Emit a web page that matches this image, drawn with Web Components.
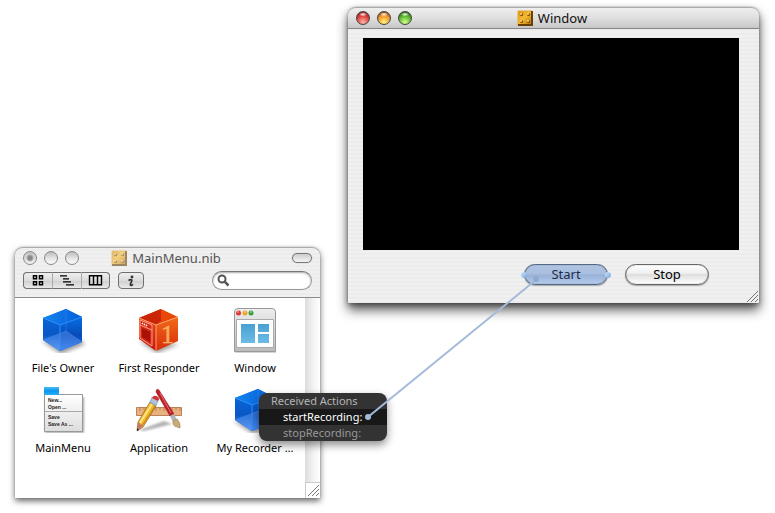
<!DOCTYPE html>
<html lang="en">
<head>
<meta charset="utf-8">
<title>Interface Builder</title>
<style>
html, body { margin: 0; min-height: 100%; background: #fff; }
body { font: 11px/16px "Noto Sans", "Open Sans", sans-serif; color: #000; }
</style>
</head>
<body>
<ib-desktop>
  <ib-window class="nib" heading="MainMenu.nib" inactive>
    <ib-toolbar slot="tools"></ib-toolbar>
    <ib-browser>
      <ib-item kind="cube" label="File's Owner"></ib-item>
      <ib-item kind="responder" label="First Responder"></ib-item>
      <ib-item kind="window" label="Window"></ib-item>
      <ib-item kind="menu" label="MainMenu"></ib-item>
      <ib-item kind="app" label="Application"></ib-item>
      <ib-item kind="cube" label="My Recorder …"></ib-item>
    </ib-browser>
  </ib-window>
  <ib-window class="preview" heading="Window">
    <ib-recorder></ib-recorder>
  </ib-window>
  <ib-actions class="popup"></ib-actions>
  <ib-connection class="wire"></ib-connection>
</ib-desktop>

<script>
const define = (name, html) => customElements.define(name, class extends HTMLElement {
  constructor() {
    super();
    this.attachShadow({ mode: "open" });
  }
  connectedCallback() {
    if (this.shadowRoot.childNodes.length) return;
    const t = document.createElement("template");
    t.innerHTML = typeof html === "function" ? html(this) : html;
    this.shadowRoot.append(t.content.cloneNode(true));
  }
});

define("ib-desktop", `
<style>
:host { display: block; position: relative; min-height: 100vh; overflow: hidden; }
::slotted(.nib) { position: absolute; left: 15px; top: 247px; width: 305px; }
::slotted(.preview) { position: absolute; left: 348px; top: 7px; width: 411px; }
::slotted(.popup) { position: absolute; left: 259px; top: 393px; width: 128px; }
::slotted(.wire) { position: absolute; inset: 0; pointer-events: none; }
</style><slot></slot>`);

define("ib-window", el => {
  const off = el.hasAttribute("inactive");
  return `
<style>
:host { display: block; border-radius: 8px 8px 0 0;
  background: repeating-linear-gradient(#f0f0f0 0 2px, #ececec 2px 4px);
  box-shadow: 0 0 1px #555, 0 7px 12px rgba(0,0,0,.65), 0 2px 5px rgba(0,0,0,.35); }
:host([inactive]) { box-shadow: 0 0 1px #666, 0 3px 6px rgba(0,0,0,.6); }
header { box-sizing: border-box; display: grid; grid-template-columns: 1fr auto 1fr; align-items: center; height: 22px; padding: 0 8px; border-radius: 8px 8px 0 0;
  border-top: 1px solid #aaa; border-bottom: 1px solid #858585; background: linear-gradient(#eee, #e1e1e1 45%, #c7c7c7); }
:host([inactive]) header { border-bottom-color: transparent; background: none; }
.lights { display: flex; gap: 7px; }
.lights button { box-sizing: border-box; width: 14px; height: 14px; padding: 0; border-radius: 50%; border: 1px solid #444; }
.on .r { background: radial-gradient(ellipse 4px 2px at 50% 20%, #fff, transparent), radial-gradient(circle at 50% 85%, #ffb6a8, #dc3f3d 55%, #6c1414); }
.on .y { background: radial-gradient(ellipse 4px 2px at 50% 20%, #fff, transparent), radial-gradient(circle at 50% 85%, #fff67c, #ee952a 55%, #713005); }
.on .g { background: radial-gradient(ellipse 4px 2px at 50% 20%, #fff, transparent), radial-gradient(circle at 50% 85%, #d8ff91, #55b42a 55%, #124a09); }
.off button { border: 1px solid #888; background: linear-gradient(#bcbcbc, #e6e6e6 55%, #fafafa); }
.off .r { background: radial-gradient(circle, #888 0 2px, transparent 4px), linear-gradient(#c2c2c2, #f2f2f2); }
h1 { display: flex; align-items: center; gap: 5px; margin: 0; font-size: 13px; font-weight: 400; line-height: 20px; color: #111; }
:host([inactive]) h1 { color: #555; padding-right: 3px; }
:host(:not([inactive])) h1 { padding-right: 3px; }
:host([inactive]) h1 svg { opacity: .6; }
.pill { justify-self: end; width: 20px; height: 10px; padding: 0; border: 1px solid #777; border-radius: 5px; background: linear-gradient(#ccc, #f5f5f5); box-shadow: 0 0 1px #888; }
</style>
<header>
  <div class="lights ${off ? "off" : "on"}"><button class="r" aria-label="Close"></button><button class="y" aria-label="Minimize"></button><button class="g" aria-label="Zoom"></button></div>
  <h1><svg width="16" height="16" viewBox="0 0 16 16"><defs><linearGradient id="g" x2="1" y2="1"><stop stop-color="#d88d08"/><stop offset=".45" stop-color="#f4bd31"/><stop offset="1" stop-color="#b66e05"/></linearGradient></defs>
    <path d="M1 1H15V15H1z" fill="url(#g)"/><path d="M1 15V1H15" fill="none" stroke="#e6a632"/><path d="M15 1V15H1" fill="none" stroke="#694006" stroke-width="2"/>
    <g fill="#7c4a03"><circle cx="4.5" cy="4.5" r="1.6"/><circle cx="11.5" cy="4.5" r="1.6"/><circle cx="4.5" cy="11.5" r="1.6"/><circle cx="11.5" cy="11.5" r="1.6"/></g>
    <g fill="#ffe38a"><circle cx="4" cy="4" r="1"/><circle cx="11" cy="4" r="1"/><circle cx="4" cy="11" r="1"/><circle cx="11" cy="11" r="1"/></g></svg>${el.getAttribute("heading")}</h1>
  ${off ? `<button class="pill" aria-label="Toggle toolbar"></button>` : "<span></span>"}
</header>
<slot name="tools"></slot><slot></slot>`;
});

define("ib-toolbar", `
<style>
:host { display: flex; align-items: center; gap: 8px; padding: 2px 8px 7px; height: 19px; border-bottom: 1px solid #8a8a8a; }
.seg { display: flex; }
button { box-sizing: border-box; display: grid; place-items: center; width: 29px; height: 17px; padding: 0; border: 1px solid #6f6f6f; border-left-color: #aaa; border-right-width: 0; background: linear-gradient(#eee, #dcdcdc 50%, #cecece 51%, #e9e9e9); }
.seg button:first-child { border-radius: 4px 0 0 4px; border-left-color: #6f6f6f; }
.seg button:last-child { border-radius: 0 4px 4px 0; border-right-width: 1px; }
.info { width: 26px; border-radius: 4px; border: 1px solid #6f6f6f; }
label { box-sizing: border-box; display: flex; align-items: center; gap: 2px; width: 100px; height: 19px; margin-left: auto; padding: 0 4px; border: 1px solid #999; border-top-color: #777; border-radius: 10px; background: #fff; box-shadow: inset 0 1px 2px #aaa; }
input { min-width: 0; flex: 1; border: 0; padding: 0; background: none; outline: 0; font: inherit; }
</style>
<div class="seg">
<button aria-label="Icon view"><svg width="12" height="12" fill="none" stroke="#000" stroke-width="1.5"><path d="M1.5 .8h3v3h-3zM7.5 .8h3v3h-3zM1.5 6.8h3v3h-3zM7.5 6.8h3v3h-3z"/></svg></button>
<button aria-label="Outline view"><svg width="16" height="12" stroke="#000" stroke-width="1.3"><path d="M1 .8H8M4 3.800H10M4 6.800H12M7 9.800H15"/></svg></button>
<button aria-label="Column view"><svg width="15" height="12" fill="none" stroke="#000" stroke-width="1.4"><path d="M1.5 .8h12v9h-12zM5.500 .8v9M9.500 .8v9"/></svg></button>
</div>
<button class="info" aria-label="Info"><svg width="8" height="12" viewBox="0 0 8 12" fill="none" stroke="#333"><circle cx="5" cy="2" r="1.4" fill="#333" stroke="none"/><path d="M1.5 5.5C3 4.5 5.5 4 4.7 6L3.4 9.2C3 10.9 4.5 10.7 6 9.3" stroke-width="1.7"/></svg></button>
<label><svg width="13" height="13" fill="none" stroke="#555" stroke-width="2"><circle cx="5" cy="5" r="3.5"/><path d="M7.7 7.7L11.5 11.5" stroke-width="2.5"/></svg><input type="text" aria-label="Search"></label>`);

const grip = `<svg width="13" height="13" viewBox="0 0 13 13" stroke="#777"><path d="M1 12L12 1M5 12L12 5M9 12L12 9"/></svg>`;

define("ib-browser", `
<style>
:host { display: grid; grid-template-columns: 1fr 15px; background: #fff; min-height: 200px; }
.items { display: grid; grid-template-columns: repeat(3, 96px); align-content: start; row-gap: 8px; padding-top: 7px; }
.bar { display: flex; flex-direction: column; background: linear-gradient(90deg, #dcdcdc, #f5f5f5 60%, #fff); }
.corner { margin-top: auto; height: 15px; background: #fff; border-top: 1px solid #ccc; border-left: 1px solid #ccc; display: grid; place-items: center; }
</style>
<div class="items"><slot></slot></div>
<div class="bar"><div class="corner">${grip}</div></div>`);

const art = {
cube: `<defs><linearGradient id="l" x2="0" y2="1"><stop stop-color="#0866d8"/><stop offset=".5" stop-color="#0957c4"/><stop offset="1" stop-color="#4b8ef0"/></linearGradient><linearGradient id="r" x2="0" y2="1"><stop stop-color="#086de4"/><stop offset=".55" stop-color="#084bb8"/><stop offset="1" stop-color="#2878f0"/></linearGradient><linearGradient id="t"><stop stop-color="#1283ef"/><stop offset="1" stop-color="#075fdc"/></linearGradient></defs>
<path d="M3 36L22 49L46 39L40 34z" fill="#000" opacity=".4" filter="blur(2px)"/>
<path d="M4 13L27 4L43 12V37L21 46L4 35z" fill="#0d62df"/><path d="M4 13L21 20V46L4 35z" fill="url(#l)"/><path d="M21 20L43 12V37L21 46z" fill="url(#r)"/><path d="M4 13L27 4L43 12L21 20z" fill="url(#t)"/>
<path d="M4 35L27 26L43 37L21 46z" fill="#7cb0ff" opacity=".35"/><path d="M27 5V26L4 35M27 26L43 37" fill="none" stroke="#4b94f5" opacity=".4"/><path d="M4 13L21 20L43 12M21 20V46" fill="none" stroke="#2f8ff5"/>`,
responder: `<defs><linearGradient id="l" x2="0" y2="1"><stop stop-color="#e14a26"/><stop offset="1" stop-color="#c9160c"/></linearGradient><linearGradient id="r" x2="0" y2="1"><stop stop-color="#f06a18"/><stop offset="1" stop-color="#d92c0b"/></linearGradient></defs>
<path d="M4 36L22 48L44 39z" fill="#000" opacity=".4" filter="blur(2px)"/>
<path d="M4 13L26 4L43 12L21 20z" fill="#e84708"/><path d="M4 13L26 4V16L21 20z" fill="#c92608"/><path d="M4 13L21 20V46L4 34z" fill="url(#l)"/><path d="M21 20L43 12V36L21 46z" fill="url(#r)"/>
<path d="M5 15L17 20V41L5 33z" fill="#d22916" stroke="#ffa27e"/><path d="M5 20L17 25" stroke="#ffa27e"/><path d="M7 23L15 27V37L7 32z" fill="#a91008"/><path d="M7 18l1 1m1 0l1 1m1 0l1 1" stroke="#fff" stroke-width="1.4"/>
<path d="M4 13L21 20L43 12M21 20V46" fill="none" stroke="#ff9e6c"/><text x="26" y="38" font-family="Liberation Serif, serif" font-size="26" fill="#f7a253" stroke="#ffc382" stroke-width=".4">1</text>`,
window: `<defs><linearGradient id="b" x2="0" y2="1"><stop stop-color="#49a0d3"/><stop offset="1" stop-color="#6bbce6"/></linearGradient><linearGradient id="c" x2="0" y2="1"><stop stop-color="#eee"/><stop offset="1" stop-color="#bbb"/></linearGradient></defs>
<path d="M4 48H45" stroke="#aaa"/><path d="M3.5 46.5V7Q3.5 3.5 7 3.5H41Q44.5 3.5 44.5 7V46.5z" fill="url(#c)" stroke="#999"/><path d="M5.5 14.5H42.5V42.5H5.5z" fill="#fff" stroke="#aaa"/><path d="M10 19H24V38H10zM27 19H38V27H27zM27 29H38V38H27z" fill="url(#b)"/>
<circle cx="7.5" cy="8" r="2.5" fill="#d33"/><circle cx="14" cy="8" r="2.5" fill="#eba51e"/><circle cx="20" cy="8" r="2.5" fill="#389d42"/><path d="M6 7h2M13 7h2M19 7h2" stroke="#fff" opacity=".7"/>`,
menu: `<defs><linearGradient id="m" x2="0" y2="1"><stop stop-color="#fff"/><stop offset="1" stop-color="#ddd"/></linearGradient><linearGradient id="n" x2="0" y2="1"><stop stop-color="#4abcf6"/><stop offset=".5" stop-color="#0895ed"/><stop offset="1" stop-color="#28b1f3"/></linearGradient></defs>
<path d="M6 12H45V48H6z" fill="#000" opacity=".35" filter="blur(1px)"/><path d="M5.5 9.500H43.500V46.500H5.500z" fill="url(#m)" stroke="#999"/><path d="M5 2H20V10H5z" fill="url(#n)"/><path d="M6 26.500H43" stroke="#aaa"/><g font-family="Liberation Sans, sans-serif" font-size="5" font-weight="700" fill="#222"><text x="9" y="17">New...</text><text x="9" y="24">Open ...</text><text x="9" y="34">Save</text><text x="9" y="41">Save As ...</text></g>`,
app: `<path d="M4 45L29 36L37 39L9 46z" fill="#000" opacity=".3" filter="blur(1px)"/><path d="M1.5 22.5H46.5V30.5H1.5z" fill="#e9b080" stroke="#b9825a"/><path d="M5 23v3M9 23v2M13 23v3M17 23v2M21 23v3M25 23v2M29 23v3M33 23v2M37 23v3M41 23v2M45 23v3" stroke="#a66a36" stroke-width=".7"/>
<path d="M24 5L39 29L35 31L21 7Q21 3 24 5z" fill="#bd2029" stroke="#8a1019" stroke-width=".5"/><path d="M25 8L36 28" stroke="#ed6c72"/><path d="M35 31L39 29L42 35L38 37z" fill="#b2b4b6"/><path d="M38 36L42 34Q46 38 45 43L42 42Q37 41 38 36z" fill="#c9ac76" stroke="#8d754f" stroke-width=".5"/>
<path d="M15 17L21 21L8 42L2 46L3 37z" fill="#f3b62a" stroke="#8d611a" stroke-width=".7"/><path d="M17 19L5 38" stroke="#ffe785" stroke-width="2"/><path d="M20 21L7 41" stroke="#c17d17"/><path d="M3 37L8 41L2 46z" fill="#c6796b"/><path d="M2 43L4 45L2 46z" fill="#222"/><path d="M17 12L23 16L21 21L15 17z" fill="#abc2dd" stroke="#71809a" stroke-width=".5"/><path d="M17 13Q19 9 23 12Q25 14 23 16z" fill="#d82e36"/>`
};

define("ib-item", el => `
<style>
:host { display: flex; flex-direction: column; align-items: center; gap: 6px; padding-bottom: 1px; line-height: 17px; white-space: nowrap; }
</style>
<svg width="48" height="48" viewBox="0 0 48 48" aria-hidden="true">${art[el.getAttribute("kind")]}</svg><span>${el.getAttribute("label")}</span>`);

define("ib-recorder", `
<style>
:host { display: block; padding-top: 9px; }
.video { height: 212px; margin: 0 20px 0 15px; background: #000; }
.row { display: flex; justify-content: flex-end; gap: 17px; padding: 14px 50px 0 0; }
button { box-sizing: border-box; position: relative; width: 84px; height: 21px; padding: 0; border: 1px solid #666; border-radius: 11px; font: 13px/17px "Noto Sans", sans-serif; color: #000; background: linear-gradient(#fff, #eee 45%, #dedede 50%, #fff); box-shadow: 0 1px 1px #aaa, inset 0 0 1px #555; }
.picked { color: #1c2d4b; border-color: #536986; background: linear-gradient(#b1c5e1, #a7bedf 48%, #98b1d6 52%, #b4cbec); }
.picked::before, .picked::after { content: ""; position: absolute; top: 7px; width: 6px; height: 6px; border-radius: 50%; background: linear-gradient(135deg, #cbe6fb, #76a8dc); }
.picked::before { left: -4px; } .picked::after { right: -4px; }
.grip { display: flex; justify-content: flex-end; padding-top: 5px; }
</style>
<div class="video"></div>
<div class="row"><button class="picked">Start</button><button>Stop</button></div>
<div class="grip">${grip}</div>`);

define("ib-actions", `
<style>
:host { display: block; border-radius: 8px; overflow: hidden; background: #333; color: #b5b5b5; box-shadow: 0 4px 9px rgba(0,0,0,.45); }
h2 { margin: 0; padding-left: 12px; font: inherit; line-height: 16px; }
button { display: block; width: 100%; height: 16px; padding: 0 0 0 24px; border: 0; background: none; color: #999; font: inherit; text-align: left; }
.hot { background: #181818; color: #fff; }
</style>
<h2>Received Actions</h2><button class="hot">startRecording:</button><button>stopRecording:</button>`);

define("ib-connection", `
<style>:host { display: block; } svg { display: block; width: 100%; height: 100%; }</style>
<svg aria-hidden="true"><path d="M368 417L537 279" stroke="#a3badb" stroke-width="2"/><circle cx="368" cy="417" r="3" fill="#a3badb"/><circle cx="536" cy="279" r="3" fill="#8faad0"/></svg>`);
</script>
</body>
</html>
